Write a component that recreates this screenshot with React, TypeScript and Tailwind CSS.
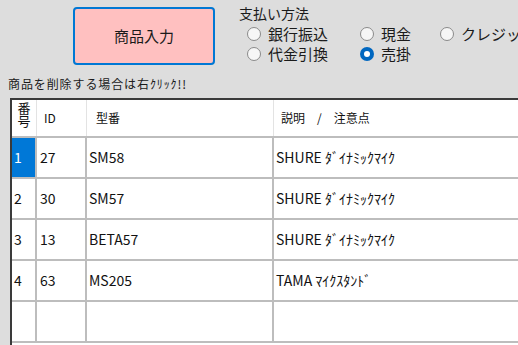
import React from "react";

const font = { fontFamily: '"Noto Sans CJK JP", "Noto Sans", sans-serif' };

function Radio({ checked, label }: { checked?: boolean; label: string }) {
  return (
    <div className="flex items-center gap-[7px] h-[20px] whitespace-nowrap">
      {checked ? (
        <span className="w-[14px] h-[14px] rounded-full bg-[#0067c0] flex items-center justify-center shrink-0">
          <span className="w-[6px] h-[6px] rounded-full bg-white" />
        </span>
      ) : (
        <span className="w-[14px] h-[14px] rounded-full border border-[#8a8a8a] bg-[#f6f6f6] shrink-0" />
      )}
      <span className="text-[15px] leading-[20px] text-[#1a1a1a]">{label}</span>
    </div>
  );
}

const rows = [
  { n: "1", id: "27", model: "SM58", desc: "SHURE ﾀﾞｲﾅﾐｯｸﾏｲｸ" },
  { n: "2", id: "30", model: "SM57", desc: "SHURE ﾀﾞｲﾅﾐｯｸﾏｲｸ" },
  { n: "3", id: "13", model: "BETA57", desc: "SHURE ﾀﾞｲﾅﾐｯｸﾏｲｸ" },
  { n: "4", id: "63", model: "MS205", desc: "TAMA ﾏｲｸｽﾀﾝﾄﾞ" },
  { n: "", id: "", model: "", desc: "" },
];

export default function App() {
  return (
    <div
      className="w-[518px] h-[345px] overflow-hidden bg-[#dddddd] text-[#111]"
      style={font}
    >
      <div className="flex h-[76px]">
        <div className="ml-[73px] mt-[7px] w-[142px] h-[58px] shrink-0 rounded-[4px] border-2 border-[#0078d4] bg-[#ffc0c0] flex items-center justify-center">
          <span className="text-[15px] text-[#1a1a1a]">商品入力</span>
        </div>
        <div className="ml-[24px] mt-[3px] flex flex-col shrink-0">
          <div className="text-[14px] leading-[20px] text-[#1a1a1a]">支払い方法</div>
          <div className="ml-[8px] mt-[1px] grid grid-cols-[113px_80px_120px]">
            <Radio label="銀行振込" />
            <Radio label="現金" />
            <Radio label="クレジットカード" />
            <Radio label="代金引換" />
            <Radio checked label="売掛" />
          </div>
        </div>
      </div>
      <div className="pl-[8px] h-[22px] text-[12px] leading-[16px] text-[#1a1a1a] tracking-[0.9px]">
        商品を削除する場合は右ｸﾘｯｸ!!
      </div>
      <div className="ml-[10px] w-[560px] h-[300px] border-l-2 border-t-2 border-[#3a3a3a] bg-white">
        <div className="grid grid-cols-[25px_50px_187px_1fr] h-[38px] border-b-2 border-[#bdbdbd] text-[12px]">
          <div className="border-r border-[#e3e3e3] flex justify-center pt-[1px]">
            <span className="w-[13px] text-[13px] leading-[13px] text-center">番号</span>
          </div>
          <div className="border-r border-[#e3e3e3] flex items-center pl-[7px]">ID</div>
          <div className="border-r border-[#e3e3e3] flex items-center pl-[9px]">型番</div>
          <div className="flex items-center pl-[7px]">説明　/　注意点</div>
        </div>
        {rows.map((r, i) => (
          <div
            key={i}
            className="grid grid-cols-[25px_50px_187px_1fr] h-[41px] border-b-2 border-[#bdbdbd] text-[14px]"
          >
            <div
              className={
                "border-r-2 border-[#bdbdbd] flex items-center pl-[2px] " +
                (i === 0 ? "bg-[#0078d7] text-white" : "")
              }
            >
              {r.n}
            </div>
            <div className="border-r-2 border-[#bdbdbd] flex items-center pl-[3px]">{r.id}</div>
            <div className="border-r-2 border-[#bdbdbd] flex items-center pl-[2px]">{r.model}</div>
            <div className="flex items-center pl-[2px]">{r.desc}</div>
          </div>
        ))}
      </div>
    </div>
  );
}
